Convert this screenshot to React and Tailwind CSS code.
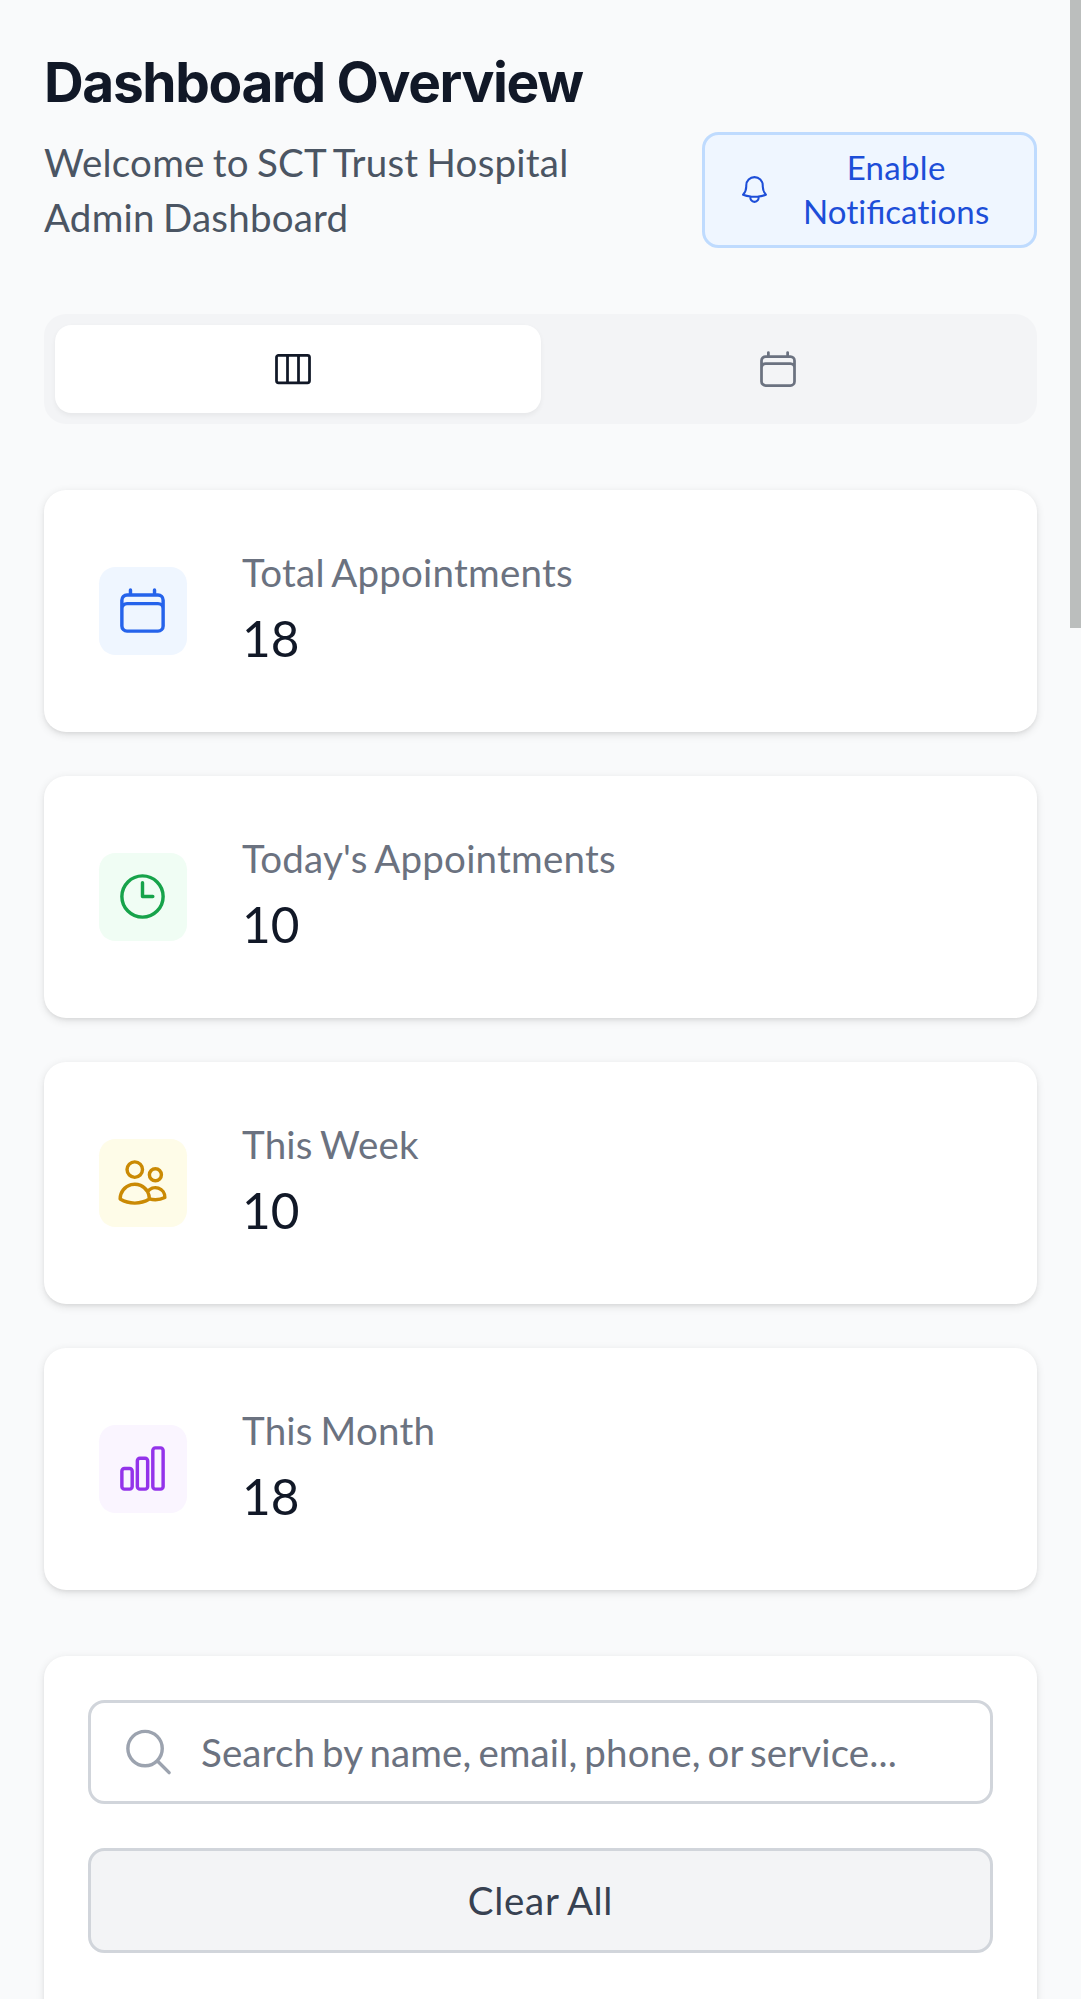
import {
  HiOutlineBell,
  HiOutlineCalendar,
  HiOutlineChartBar,
  HiOutlineClock,
  HiOutlineMagnifyingGlass,
  HiOutlineUsers,
  HiOutlineViewColumns,
} from "react-icons/hi2";

const stats = [
  { label: "Total Appointments", value: 18, Icon: HiOutlineCalendar, tone: "bg-[#eff6ff] text-[#2563eb]" },
  { label: "Today's Appointments", value: 10, Icon: HiOutlineClock, tone: "bg-[#f0fdf4] text-[#16a34a]" },
  { label: "This Week", value: 10, Icon: HiOutlineUsers, tone: "bg-[#fefce8] text-[#ca8a04]" },
  { label: "This Month", value: 18, Icon: HiOutlineChartBar, tone: "bg-[#faf5ff] text-[#9333ea]" },
];

function Header() {
  return (
    <header>
      <h1 className="font-[Inter,sans-serif] text-xl font-bold tracking-tight text-[#111827]">
        Dashboard Overview
      </h1>
      <div className="mt-1 flex items-center justify-between gap-4">
        <p className="text-sm tracking-[0.006em] text-[#4b5563] [word-spacing:-0.05em]">
          Welcome to SCT Trust Hospital Admin Dashboard
        </p>
        <button className="flex h-[42px] w-[121.7px] shrink-0 items-center rounded-md border-[1.1px] border-[#bfdbfe] bg-[#eff6ff] pr-3 pl-[11.7px] text-xs text-[#1d4ed8]">
          <HiOutlineBell className="mr-[7.6px] size-3 shrink-0" />
          <span className="flex-1 pb-[0.8px] text-center">
            <span className="tracking-[0.01em]">Enable</span>{" "}
            <span className="whitespace-nowrap">
              <span className="tracking-[0.004em]">Noti</span>fica<span className="tracking-[0.004em]">tions</span>
            </span>
          </span>
        </button>
      </div>
    </header>
  );
}

function ViewTabs() {
  return (
    <div className="grid grid-cols-2 rounded-lg bg-[#f3f4f6] p-1">
      <button className="flex h-8 items-center justify-center rounded-md bg-white text-[#111827] shadow-xs">
        <HiOutlineViewColumns className="mr-[3.6px] size-4" />
      </button>
      <button className="flex h-8 items-center justify-center rounded-md text-[#6b7280]">
        <HiOutlineCalendar className="mr-1 size-4" />
      </button>
    </div>
  );
}

function StatCard({ label, value, Icon, tone }) {
  return (
    <div className="flex items-center gap-5 rounded-lg bg-white p-5 shadow">
      <div className={`w-8 rounded-md py-1.5 pl-[5.8px] ${tone}`}>
        <Icon className="size-5" />
      </div>
      <dl>
        <dt className="text-sm tracking-[0.006em] text-[#6b7280] [word-spacing:-0.06em]">{label}</dt>
        <dd className="text-lg text-[#111827]">{value}</dd>
      </dl>
    </div>
  );
}

function Filters() {
  return (
    <div className="flex h-60 flex-col gap-4 rounded-lg bg-white p-4 shadow">
      <div className="relative">
        <HiOutlineMagnifyingGlass className="absolute top-1/2 left-3 size-5 -translate-y-1/2 text-[#9ca3af]" />
        <input
          className="block h-[38px] w-full rounded-md border-[1.1px] border-[#d1d5db] bg-white pr-3 pl-10 text-sm tracking-[0.003em] [word-spacing:-0.075em] placeholder:text-[#6b7280]"
          placeholder="Search by name, email, phone, or service..."
        />
      </div>
      <button className="h-[38px] rounded-md border-[1.1px] border-[#d1d5db] bg-[#f3f4f6] text-sm tracking-[0.018em] text-[#374151] [word-spacing:-0.03em]">
        Clear All
      </button>
    </div>
  );
}

export default function App() {
  return (
    <div className="relative h-[1999px] w-[1081px] overflow-hidden bg-[#f9fafb]">
      <main className="flex flex-col gap-6 p-4 font-[Lato,sans-serif] [zoom:2.75]">
        <Header />
        <ViewTabs />
        <section className="flex flex-col gap-4">
          {stats.map((stat) => (
            <StatCard key={stat.label} {...stat} />
          ))}
        </section>
        <Filters />
      </main>
      <div className="absolute top-0 right-0 h-[628px] w-[11px] bg-[#bbbebd]" />
    </div>
  );
}
